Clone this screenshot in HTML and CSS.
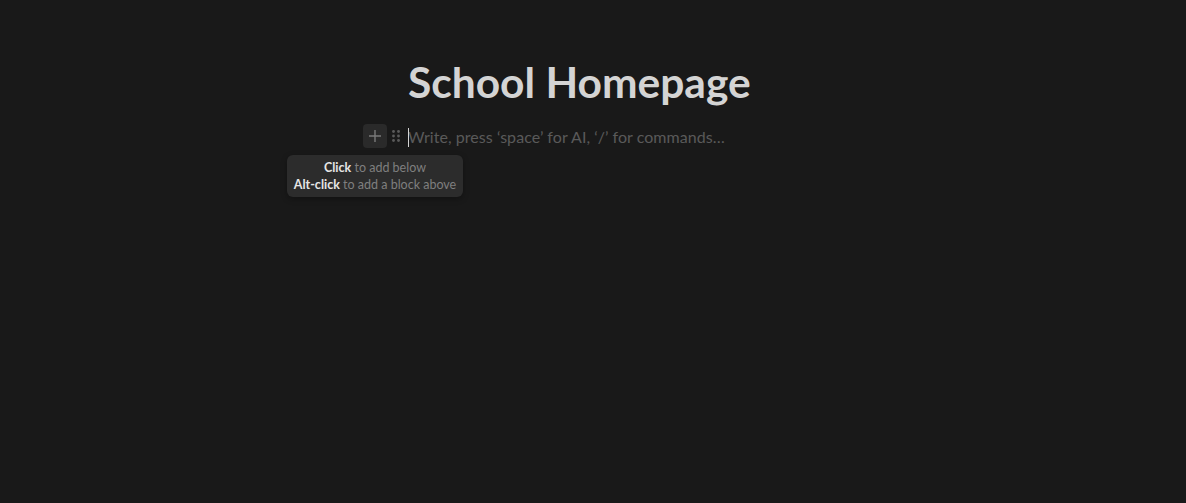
FILE: index.html
```html
<!DOCTYPE html>
<html>
<head>
<meta charset="utf-8">
<link rel="stylesheet" href="styles.css">
</head>
<body>
<main class="page">
  <h1 class="title">School Homepage</h1>
  <div class="block">
    <div class="controls">
      <div class="plus">
        <svg width="16" height="16" viewBox="0 0 16 16"><path d="M8 2v12M2 8h12" stroke="#7a7a7a" stroke-width="1.4" fill="none"/></svg>
      </div>
      <div class="handle">
        <svg width="10" height="16" viewBox="0 0 10 16"><g fill="#5a5a5a"><circle cx="2.5" cy="3.5" r="1.4"/><circle cx="7.5" cy="3.5" r="1.4"/><circle cx="2.5" cy="8" r="1.4"/><circle cx="7.5" cy="8" r="1.4"/><circle cx="2.5" cy="12.5" r="1.4"/><circle cx="7.5" cy="12.5" r="1.4"/></g></svg>
      </div>
      <div class="tooltip">
        <div><b>Click</b> to add below</div>
        <div><b>Alt-click</b> to add a block above</div>
      </div>
    </div>
    <div class="placeholder"><span class="caret"></span>Write, press ‘space’ for AI, ‘/’ for commands…</div>
  </div>
</main>
</body>
</html>
```
FILE: styles.css
```css
html, body {
  margin: 0;
  padding: 0;
  background: #191919;
  height: 100%;
}
body {
  font-family: "Lato", "Noto Sans", sans-serif;
}
.page {
  width: 370px;
  margin: 0 auto;
  padding-top: 58px;
  position: relative;
}
.title {
  margin: 0;
  font-size: 42.5px;
  font-weight: 700;
  color: #d4d4d4;
  line-height: 48px;
  white-space: nowrap;
}
.block {
  display: flex;
  align-items: center;
  margin-top: 18px;
  height: 24px;
  position: relative;
}
.controls {
  position: absolute;
  left: -45px;
  top: 0;
  display: flex;
  align-items: center;
  gap: 3px;
}
.plus {
  width: 24px;
  height: 24px;
  border-radius: 4px;
  background: #2a2a2a;
  display: flex;
  align-items: center;
  justify-content: center;
}
.handle {
  width: 12px;
  height: 24px;
  display: flex;
  align-items: center;
  justify-content: center;
}
.tooltip {
  position: absolute;
  top: 31px;
  left: -76px;
  width: 176px;
  box-sizing: border-box;
  padding: 4px 6px;
  background: #2c2c2c;
  border-radius: 6px;
  box-shadow: 0 2px 6px rgba(0,0,0,0.3);
  font-size: 12.5px;
  line-height: 17px;
  color: #7f7f7f;
  text-align: center;
  white-space: nowrap;
}
.tooltip b {
  color: #e6e6e6;
  font-weight: 700;
}
.placeholder {
  font-size: 16px;
  letter-spacing: 0.05px;
  color: #5a5a5a;
  white-space: nowrap;
  position: relative;
}
.caret {
  position: absolute;
  left: 0;
  top: 1px;
  width: 1px;
  height: 19px;
  background: #d4d4d4;
}
```
